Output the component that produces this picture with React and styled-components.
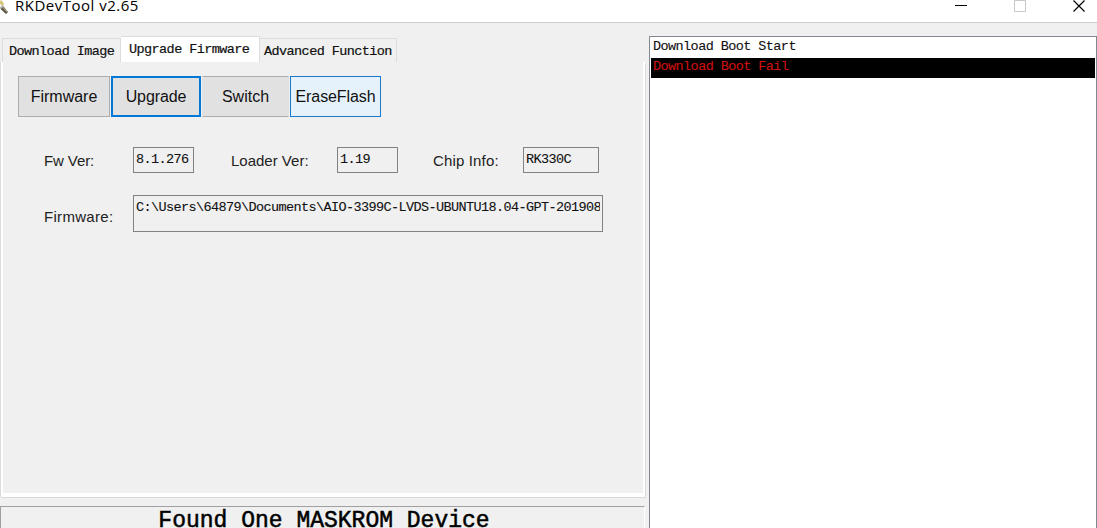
import React from "react";
import styled, { createGlobalStyle } from "styled-components";

const Global = createGlobalStyle`
  * { box-sizing: border-box; }
  html, body { margin: 0; overflow: hidden; background: #f0f0f0; }
`;

const mono = `"Liberation Mono", monospace`;
const sans = `"Liberation Sans", sans-serif`;

const Window = styled.div`
  width: 1097px;
  height: 528px;
  overflow: hidden;
  display: flex;
  flex-direction: column;
  background: #f0f0f0;
  color: #111;
`;

const TitleBar = styled.header`
  height: 23px;
  flex: none;
  display: flex;
  justify-content: space-between;
  background: #fff;
  border-bottom: 1px solid #cfcfcf;
`;

const Brand = styled.div`
  display: flex;
  gap: 6px;
`;

const Title = styled.span`
  font: 15px/20px "Open Sans", sans-serif;
  margin-top: -5px;
  letter-spacing: 0.5px;
  white-space: nowrap;
  color: #000;
`;

const Controls = styled.div`
  display: flex;
  gap: 47px;
  padding-right: 12px;
`;

const Body = styled.main`
  flex: 1;
  min-height: 0;
  display: flex;
  gap: 2px;
`;

const Left = styled.section`
  width: 647px;
  display: flex;
  flex-direction: column;
  padding-top: 13px;
`;

const Tabs = styled.nav`
  height: 26px;
  flex: none;
  display: flex;
  align-items: flex-end;
  padding-left: 2px;
`;

const Tab = styled.div`
  width: ${(p) => p.$width}px;
  height: ${(p) => (p.$active ? 26 : 24)}px;
  padding-left: ${(p) => p.$pad}px;
  border: 1px solid #dcdcdc;
  border-bottom: 0;
  ${(p) => p.$joined && "border-left: 0;"}
  background: ${(p) => (p.$active ? "#fff" : "#f0f0f0")};
  font: 13.5px/25px ${mono};
  letter-spacing: -0.58px;
  -webkit-text-stroke: 0.2px #111;
  white-space: nowrap;
`;

const Pane = styled.div`
  width: 644px;
  height: 435px;
  flex: none;
  margin-left: 1px;
  border: solid #fff;
  border-width: 0 2px 4px 2px;
  box-shadow: 0 1px 0 #d9d9d9, -1px 0 0 #dcdcdc, 1px 1px 0 #dcdcdc;
  padding: 14px 0 0 15px;
`;

const Buttons = styled.div`
  display: flex;
`;

const Button = styled.button`
  width: ${(p) => p.$width}px;
  height: 41px;
  padding: 0;
  border: ${(p) => p.$border || "1px solid #adadad"};
  ${(p) => p.$open && "border-left-color: #e1e1e1; border-right-color: #e1e1e1;"}
  margin-right: 1px;
  background: ${(p) => p.$fill || "#e1e1e1"};
  font: 16px/18px ${sans};
  letter-spacing: ${(p) => p.$spacing || 0}px;
  color: #111;
`;

const Fields = styled.div`
  display: flex;
  align-items: flex-start;
  margin-top: ${(p) => p.$top}px;
  padding-left: 26px;
`;

const Label = styled.label`
  width: ${(p) => p.$width}px;
  padding-top: ${(p) => p.$top}px;
  flex: none;
  font: 15px/18px ${sans};
  letter-spacing: ${(p) => p.$spacing || 0}px;
  white-space: nowrap;
  color: #222;
`;

const Field = styled.div`
  width: ${(p) => p.$width}px;
  height: ${(p) => p.$height || 26}px;
  flex: none;
  margin-right: ${(p) => p.$gap || 0}px;
  border: 1px solid #828282;
  padding: 3px 2px 0;
`;

const Value = styled.div`
  overflow: hidden;
  font: 13.5px/17px ${mono};
  letter-spacing: -0.6px;
  -webkit-text-stroke: 0.1px #111;
  white-space: nowrap;
`;

const Status = styled.footer`
  flex: 1;
  margin-top: 9px;
  margin-right: 2px;
  border-top: 1px solid #a0a0a0;
  border-left: 1px solid #a0a0a0;
  border-right: 1px solid #fff;
  padding: 1px 0 0 3px;
  font: 23px/27px ${mono};
  -webkit-text-stroke: 0.5px #000;
  color: #000;
  text-align: center;
  white-space: nowrap;
  overflow: hidden;
`;

const Log = styled.section`
  width: 448px;
  height: 500px;
  margin-top: 13px;
  border: 1px solid #828790;
  background: #fff;
  padding: 1px;
`;

const LogRow = styled.div`
  height: 20px;
  padding-left: 2px;
  font: 13.5px/18px ${mono};
  letter-spacing: -0.58px;
  white-space: pre;
  background: ${(p) => (p.$fail ? "#000" : "#fff")};
  color: ${(p) => (p.$fail ? "#d01010" : "#111")};
  -webkit-text-stroke: 0.1px currentColor;
`;

export default function App() {
  return (
    <Window>
      <Global />
      <TitleBar>
        <Brand>
          <svg width="9" height="16" viewBox="0 0 9 16">
            <path d="M0 1 3 5" stroke="#d6c477" strokeWidth="3" />
            <path d="M0 7 3 5 6 9 4 12 0 9" fill="#bcbab3" />
            <path d="m2 8 5 5" stroke="#55503f" strokeWidth="3" />
            <path d="m3 8 4 4" stroke="#aaa06c" strokeWidth="1" />
          </svg>
          <Title>RKDevTool v2.65</Title>
        </Brand>
        <Controls>
          <svg width="12" height="14"><path d="M0 5.5h12" stroke="#000" /></svg>
          <svg width="12" height="14"><path d="M.5.5h11v11H.5z" stroke="#c8c8c8" fill="none" /></svg>
          <svg width="12" height="14"><path d="m.5.5 11 11m0-11-11 11" stroke="#000" strokeWidth="1.2" /></svg>
        </Controls>
      </TitleBar>
      <Body>
        <Left>
          <Tabs>
            <Tab $width={119} $pad={6}>Download Image</Tab>
            <Tab $width={139} $pad={8} $active $joined>Upgrade Firmware</Tab>
            <Tab $width={137} $pad={4} $joined>Advanced Function</Tab>
          </Tabs>
          <Pane>
            <Buttons>
              <Button $width={92}>Firmware</Button>
              <Button $width={90} $border="2px solid #0078d7" $spacing={-0.1}>Upgrade</Button>
              <Button $width={87} $open>Switch</Button>
              <Button $width={91} $border="1px solid #1979ca" $fill="#e5f1fb" $spacing={-0.1}>EraseFlash</Button>
            </Buttons>
            <Fields $top={30}>
              <Label $width={89} $top={5} $spacing={-0.1}>Fw Ver:</Label>
              <Field $width={61} $gap={37}><Value>8.1.276</Value></Field>
              <Label $width={106} $top={5}>Loader Ver:</Label>
              <Field $width={61} $gap={35}><Value>1.19</Value></Field>
              <Label $width={90} $top={5} $spacing={0.15}>Chip Info:</Label>
              <Field $width={76}><Value>RK330C</Value></Field>
            </Fields>
            <Fields $top={22}>
              <Label $width={89} $top={13} $spacing={0.3}>Firmware:</Label>
              <Field $width={470} $height={37}>
                <Value>C:\Users\64879\Documents\AIO-3399C-LVDS-UBUNTU18.04-GPT-201908</Value>
              </Field>
            </Fields>
          </Pane>
          <Status>Found One MASKROM Device</Status>
        </Left>
        <Log>
          <LogRow>Download Boot Start</LogRow>
          <LogRow $fail>Download Boot Fail</LogRow>
        </Log>
      </Body>
    </Window>
  );
}
